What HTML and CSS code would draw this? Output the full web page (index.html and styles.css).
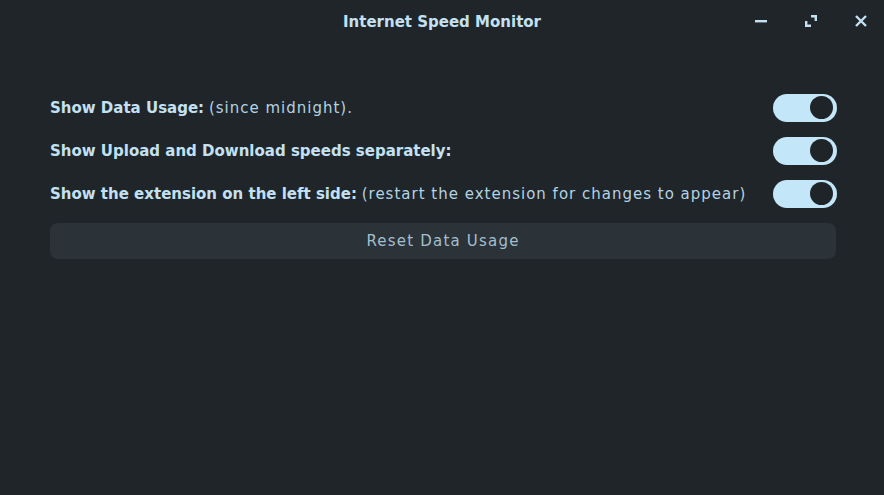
FILE: index.html
```html
<!DOCTYPE html>
<html>
<head>
<meta charset="utf-8">
<link rel="stylesheet" href="styles.css">
</head>
<body>
<div class="window">
  <header class="titlebar">
    <div class="title">Internet Speed Monitor</div>
    <div class="controls">
      <span class="ctl">
        <svg width="14" height="14" viewBox="0 0 14 14"><rect x="1" y="6" width="12" height="2.4" fill="#c3e1f3"/></svg>
      </span>
      <span class="ctl">
        <svg width="14" height="14" viewBox="0 0 14 14" fill="none" stroke="#c3e1f3" stroke-width="2.4"><path d="M7 2.2H11.8V7"/><path d="M2.2 7V11.8H7"/></svg>
      </span>
      <span class="ctl">
        <svg width="14" height="14" viewBox="0 0 14 14" fill="none" stroke="#c3e1f3" stroke-width="2.4"><path d="M2 2L12 12M12 2L2 12"/></svg>
      </span>
    </div>
  </header>
  <main class="content">
    <div class="row">
      <div class="label"><b>Show Data Usage:</b> <span class="note">(since midnight).</span></div>
      <div class="switch"><span class="knob"></span></div>
    </div>
    <div class="row">
      <div class="label"><b>Show Upload and Download speeds separately:</b></div>
      <div class="switch"><span class="knob"></span></div>
    </div>
    <div class="row">
      <div class="label"><b>Show the extension on the left side:</b> <span class="note">(restart the extension for changes to appear)</span></div>
      <div class="switch"><span class="knob"></span></div>
    </div>
    <button class="reset">Reset Data Usage</button>
  </main>
</div>
</body>
</html>
```
FILE: styles.css
```css
html, body {
  margin: 0;
  padding: 0;
  background: #1f2529;
}
body {
  font-family: "DejaVu Sans", sans-serif;
  color: #c3e1f3;
  width: 884px;
  height: 495px;
  overflow: hidden;
}
.titlebar {
  height: 43px;
  display: flex;
  align-items: center;
  justify-content: center;
  position: relative;
}
.title {
  font-weight: 700;
  font-size: 15px;
}
.controls {
  position: absolute;
  right: 11px;
  top: 0;
  height: 42px;
  display: flex;
  align-items: center;
  gap: 26px;
}
.ctl {
  width: 24px;
  display: flex;
  justify-content: center;
}
.ctl svg { display: block; }
.content {
  padding: 50px 47px 0 50px;
  display: flex;
  flex-direction: column;
}
.row {
  display: flex;
  align-items: center;
  justify-content: space-between;
  height: 29px;
  margin-bottom: 14px;
}
.label {
  font-size: 15px;
  color: #c3e1f3;
  padding-top: 1px;
}
.label b { font-weight: 700; }
.note {
  letter-spacing: 1px;
  color: #b4d2e2;
}
.switch {
  width: 64px;
  height: 28px;
  border-radius: 14px;
  background: #c3e6f8;
  display: flex;
  align-items: center;
  justify-content: flex-end;
  padding-right: 4px;
  box-sizing: border-box;
}
.knob {
  width: 23px;
  height: 23px;
  border-radius: 50%;
  background: #1e2428;
}
.reset {
  margin-top: 1px;
  width: 786px;
  height: 36px;
  border: none;
  border-radius: 8px;
  background: #2b3238;
  color: #a3bfcf;
  font-family: "DejaVu Sans", sans-serif;
  font-size: 15px;
  letter-spacing: 1.2px;
}
```
